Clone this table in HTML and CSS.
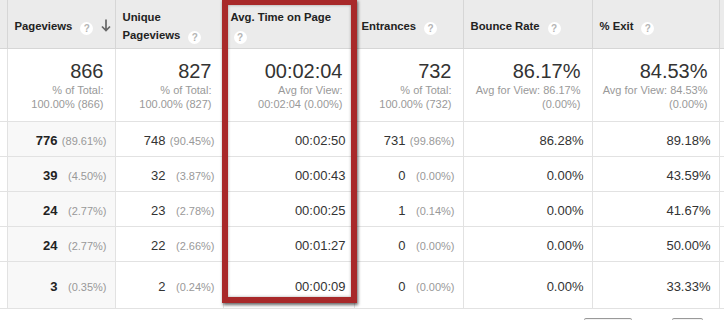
FILE: index.html
```html
<!DOCTYPE html>
<html>
<head>
<meta charset="utf-8">
<link rel="stylesheet" href="styles.css">
</head>
<body>
<div class="wrap">
  <table class="report">
    <colgroup>
      <col class="c-edge"><col class="c-pv"><col class="c-upv"><col class="c-avg"><col class="c-ent"><col class="c-br"><col class="c-ex"><col class="c-tail">
    </colgroup>
    <thead>
      <tr>
        <th></th>
        <th><span class="hd">Pageviews<span class="help">?</span><svg class="sort" width="10" height="13" viewBox="0 0 10 13"><path d="M5 0.5V11.5M1 7.5L5 11.5L9 7.5" fill="none" stroke="#666" stroke-width="1.7"/></svg></span></th>
        <th><span class="hd">Unique<br>Pageviews<span class="help">?</span></span></th>
        <th><span class="hd">Avg. Time on Page<br><span class="help first">?</span></span></th>
        <th><span class="hd">Entrances<span class="help">?</span></span></th>
        <th><span class="hd">Bounce Rate<span class="help">?</span></span></th>
        <th><span class="hd">% Exit<span class="help">?</span></span></th>
        <th></th>
      </tr>
    </thead>
    <tbody>
      <tr class="summary">
        <td></td>
        <td><div class="big">866</div><div class="sub">% of Total:<br>100.00% (866)</div></td>
        <td><div class="big">827</div><div class="sub">% of Total:<br>100.00% (827)</div></td>
        <td><div class="big">00:02:04</div><div class="sub">Avg for View:<br>00:02:04 (0.00%)</div></td>
        <td><div class="big">732</div><div class="sub">% of Total:<br>100.00% (732)</div></td>
        <td><div class="big">86.17%</div><div class="sub">Avg for View: 86.17%<br>(0.00%)</div></td>
        <td><div class="big">84.53%</div><div class="sub">Avg for View: 84.53%<br>(0.00%)</div></td>
        <td></td>
      </tr>
      <tr>
        <td></td>
        <td class="sorted"><b>776</b><span class="pct">(89.61%)</span></td>
        <td>748<span class="pct">(90.45%)</span></td>
        <td>00:02:50</td>
        <td>731<span class="pct">(99.86%)</span></td>
        <td>86.28%</td>
        <td>89.18%</td>
        <td></td>
      </tr>
      <tr>
        <td></td>
        <td class="sorted"><b>39</b><span class="pct">(4.50%)</span></td>
        <td>32<span class="pct">(3.87%)</span></td>
        <td>00:00:43</td>
        <td>0<span class="pct">(0.00%)</span></td>
        <td>0.00%</td>
        <td>43.59%</td>
        <td></td>
      </tr>
      <tr>
        <td></td>
        <td class="sorted"><b>24</b><span class="pct">(2.77%)</span></td>
        <td>23<span class="pct">(2.78%)</span></td>
        <td>00:00:25</td>
        <td>1<span class="pct">(0.14%)</span></td>
        <td>0.00%</td>
        <td>41.67%</td>
        <td></td>
      </tr>
      <tr>
        <td></td>
        <td class="sorted"><b>24</b><span class="pct">(2.77%)</span></td>
        <td>22<span class="pct">(2.66%)</span></td>
        <td>00:01:27</td>
        <td>0<span class="pct">(0.00%)</span></td>
        <td>0.00%</td>
        <td>50.00%</td>
        <td></td>
      </tr>
      <tr class="last">
        <td></td>
        <td class="sorted"><b>3</b><span class="pct">(0.35%)</span></td>
        <td>2<span class="pct">(0.24%)</span></td>
        <td>00:00:09</td>
        <td>0<span class="pct">(0.00%)</span></td>
        <td>0.00%</td>
        <td>33.33%</td>
        <td></td>
      </tr>
    </tbody>
  </table>
  <div class="highlight"></div>
  <div class="pager">
    <span class="btn wide"></span>
    <span class="btn narrow"></span>
  </div>
</div>
</body>
</html>
```

FILE: styles.css
```css
html, body {
  margin: 0;
  padding: 0;
  background: #fff;
}
body {
  font-family: "Liberation Sans", Arial, sans-serif;
  color: #333;
  width: 724px;
  height: 320px;
  overflow: hidden;
}
.wrap {
  position: relative;
  width: 724px;
}
.report {
  border-collapse: collapse;
  table-layout: fixed;
  width: 724px;
}
.c-edge { width: 7px; }
.c-pv { width: 108px; }
.c-upv { width: 108px; }
.c-avg { width: 131px; }
.c-ent { width: 109px; }
.c-br { width: 129px; }
.c-ex { width: 127px; }
.c-tail { width: 5px; }

.report th {
  background: #ebebeb;
  height: 45px;
  padding: 3px 4px 0 7px;
  border: 1px solid #d6d6d6;
  border-top: none;
  text-align: left;
  vertical-align: middle;
  font-size: 11.3px;
  font-weight: bold;
  color: #222;
  line-height: 18px;
}
.report th:first-child { border-left: none; padding: 0; }
.report th:last-child { border-right: none; padding: 0; }
.hd {
  display: inline;
  white-space: nowrap;
}
.help {
  display: inline-block;
  width: 13px;
  height: 13px;
  border-radius: 50%;
  background: #fff;
  color: #b5b5b5;
  font-size: 10px;
  font-weight: bold;
  line-height: 13px;
  text-align: center;
  margin-left: 8px;
  vertical-align: -2px;
}
.help.first { margin-left: 3px; }
.sort {
  margin-left: 8px;
  vertical-align: -2px;
}

.report td {
  border: 1px solid #e2e2e2;
  text-align: right;
  font-size: 13px;
  padding: 2px 8px 0 4px;
  height: 32px;
  white-space: nowrap;
  color: #333;
}
.report td:first-child { border-left: none; padding: 0; }
.report td:last-child { border-right: none; padding: 0; }
.report td.sorted { background: #f8f8f8; }
.report b { font-weight: bold; color: #222; }
.pct {
  display: inline-block;
  width: 45px;
  margin-left: 4px;
  font-size: 11px;
  color: #999;
  text-align: right;
}
.report tr.summary td {
  height: 62px;
  vertical-align: top;
  padding: 10px 11px 0 4px;
}
.report tr.summary td:first-child,
.report tr.summary td:last-child { padding: 0; }
.big {
  font-size: 20px;
  line-height: 24px;
  color: #333;
}
.sub {
  font-size: 11px;
  line-height: 14px;
  color: #999;
}
.report tr.last td { height: 44px; }

.highlight {
  position: absolute;
  left: 222px;
  top: -1px;
  width: 123px;
  height: 292px;
  border: 6px solid #a8292a;
  box-shadow: 1px 2px 3px rgba(0,0,0,0.6), inset 0 0 3px rgba(0,0,0,0.35);
  pointer-events: none;
}
.pager {
  display: flex;
  margin-top: 9px;
  padding-left: 584px;
  gap: 40px;
}
.btn {
  display: block;
  height: 2px;
  border: 1px solid #aaa;
  border-top-color: #999;
  border-bottom: none;
  border-radius: 2px 2px 0 0;
  background: #f3f3f3;
}
.btn.wide { width: 46px; }
.btn.narrow { width: 29px; }
```
